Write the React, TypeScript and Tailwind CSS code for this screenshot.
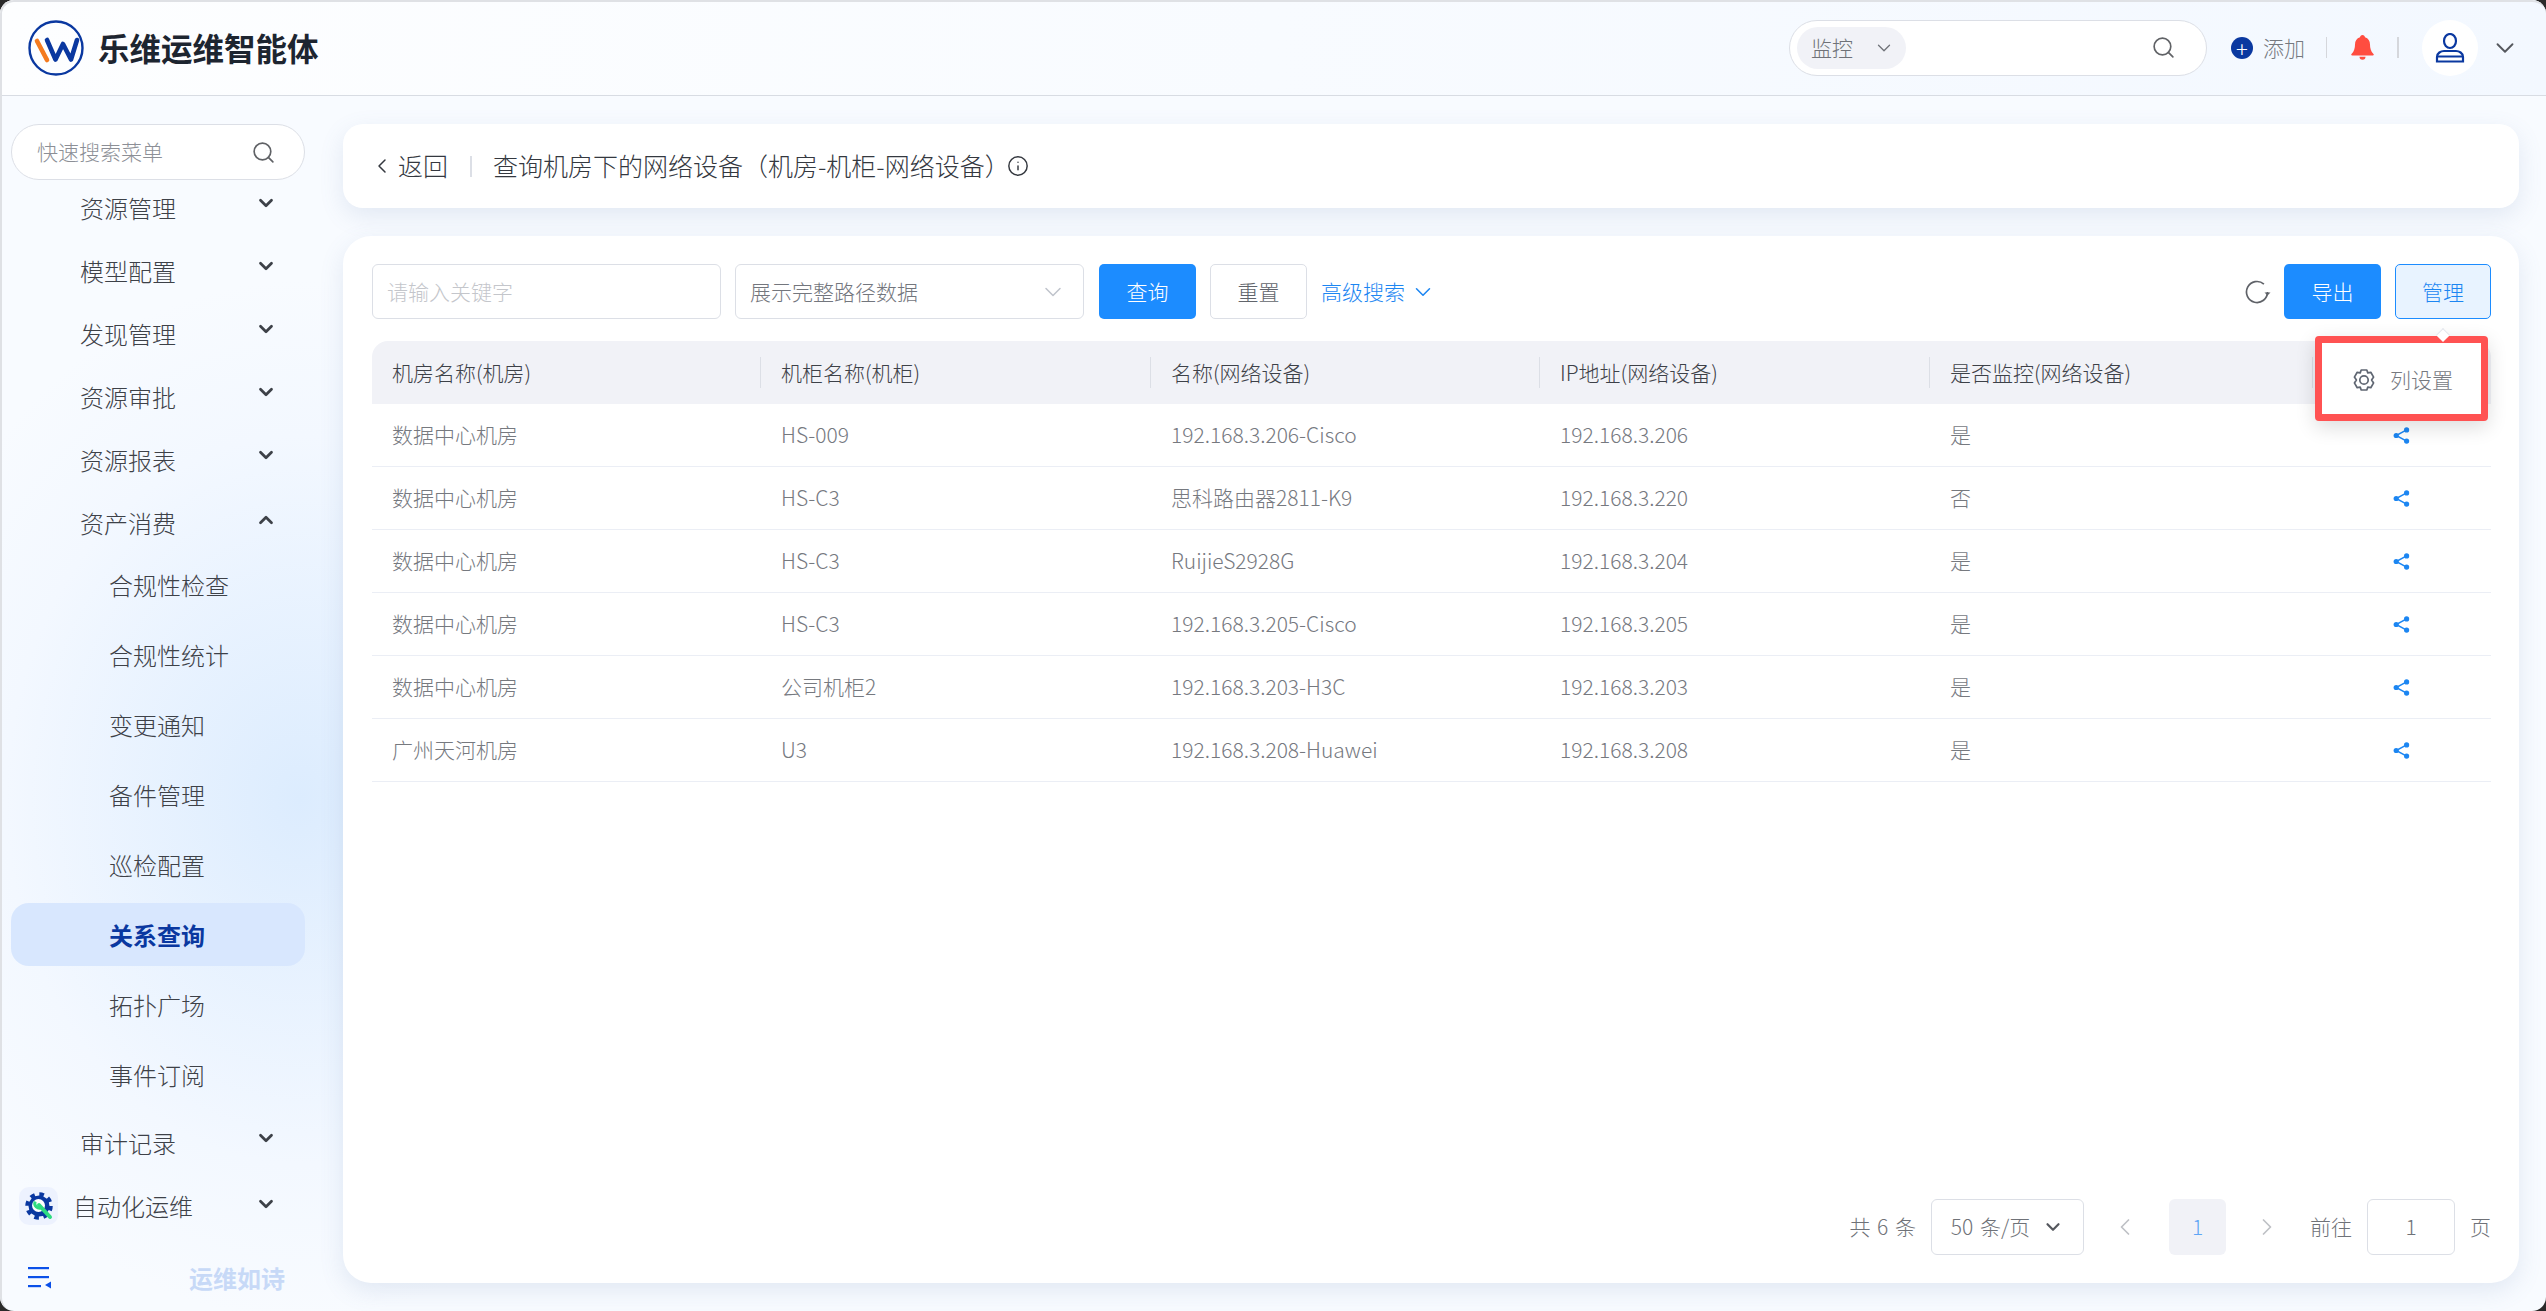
import { ChevronDown, ChevronLeft, ChevronRight, ChevronUp, Info, Search } from 'lucide-react'

const groupsTop = ['资源管理', '模型配置', '发现管理', '资源审批', '资源报表']
const subItems = ['合规性检查', '合规性统计', '变更通知', '备件管理', '巡检配置', '关系查询', '拓扑广场', '事件订阅']

const columns = ['机房名称(机房)', '机柜名称(机柜)', '名称(网络设备)', 'IP地址(网络设备)', '是否监控(网络设备)']
const rows = [
  ['数据中心机房', 'HS-009', '192.168.3.206-Cisco', '192.168.3.206', '是'],
  ['数据中心机房', 'HS-C3', '思科路由器2811-K9', '192.168.3.220', '否'],
  ['数据中心机房', 'HS-C3', 'RuijieS2928G', '192.168.3.204', '是'],
  ['数据中心机房', 'HS-C3', '192.168.3.205-Cisco', '192.168.3.205', '是'],
  ['数据中心机房', '公司机柜2', '192.168.3.203-H3C', '192.168.3.203', '是'],
  ['广州天河机房', 'U3', '192.168.3.208-Huawei', '192.168.3.208', '是'],
]

const gridCols = 'grid grid-cols-[389px_390px_389px_390px_383px_178px]'

function Logo() {
  return (
    <svg width="56" height="56" viewBox="0 0 56 56" fill="none">
      <circle cx="28" cy="28" r="26.5" stroke="#0a38a0" strokeWidth="2.4" />
      <path d="M9 21l10 19" stroke="#f47b20" strokeWidth="4.6" strokeLinecap="round" />
      <path d="M19 20l8.500 19.500L35 24l8 15.500L49 20" stroke="#0a38a0" strokeWidth="4.6" strokeLinecap="round" strokeLinejoin="round" />
    </svg>
  )
}

function ShareIcon() {
  return (
    <svg width="17" height="17" viewBox="0 0 17 17" fill="#1c86f2" stroke="#1c86f2">
      <circle cx="3.200" cy="8.500" r="2.600" stroke="none" />
      <circle cx="13.600" cy="2.900" r="2.600" stroke="none" />
      <circle cx="13.600" cy="14.100" r="2.600" stroke="none" />
      <path d="M13.600 2.900L3.200 8.500l10.400 5.600" fill="none" strokeWidth="1.500" />
    </svg>
  )
}

function GearIcon() {
  return (
    <svg width="24" height="24" viewBox="0 0 24 24" fill="none" stroke="#5f6672" strokeWidth="1.700" strokeLinejoin="round">
      <path d="M9.200 2h5.600l1 2.900 3-.6 2.800 4.800-2 2.900 2 2.900-2.800 4.800-3-.6-1 2.900H9.200l-1-2.900-3 .6-2.800-4.800 2-2.900-2-2.900 2.800-4.800 3 .6z" />
      <circle cx="12" cy="12" r="4.200" />
    </svg>
  )
}

function RefreshIcon() {
  return (
    <svg width="26" height="24" viewBox="0 0 26 24" fill="none" stroke="#5f6268" strokeWidth="1.700" className="ml-auto">
      <path d="M22.500 12a10.500 10.500 0 1 1-3.600-7.900" />
      <path d="M19.500 12.500h6l-3 3z" fill="#5f6268" stroke="none" />
    </svg>
  )
}

function AutoIcon() {
  return (
    <svg width="28" height="28" viewBox="0 0 28 28" fill="none">
      <circle cx="14" cy="14" r="10.500" fill="#0a38a0" />
      <circle cx="14" cy="14" r="11.500" stroke="#0a38a0" strokeWidth="4.500" strokeDasharray="4.500 4.530" />
      <circle cx="13.500" cy="13.500" r="6.500" fill="#fff" />
      <path d="M14 13l11 12" stroke="#2fdc80" strokeWidth="4" strokeLinecap="round" />
      <path d="M10.200 9.500a4.800 4.800 0 0 0 6.600 6.200" stroke="#2fdc80" strokeWidth="3" />
    </svg>
  )
}

function CollapseIcon() {
  return (
    <svg width="23" height="22" viewBox="0 0 23 22" fill="#0b50e8">
      <rect x="0" y="0" width="21" height="2.200" />
      <rect x="0" y="9" width="21" height="2.200" />
      <rect x="0" y="18" width="13" height="2.200" />
      <path d="M23 14.500v7l-6-3.500z" />
    </svg>
  )
}

function BellIcon() {
  return (
    <svg width="25" height="25" viewBox="0 0 25 25" fill="#ff4d40">
      <path d="M12.500 0c1.400 0 2.400 1 2.500 2.300 3.300 1 5 3.900 5 7.200 0 3.600.8 6.800 3.500 9.500.6.700.2 1.500-.7 1.500H2.200c-.9 0-1.300-.8-.7-1.500C4.200 16.300 5 13.100 5 9.500c0-3.300 1.700-6.200 5-7.200C10.100 1 11.100 0 12.500 0z" />
      <path d="M9.500 21.700h6a3 3 0 0 1-6 0z" />
    </svg>
  )
}

function UserIcon() {
  return (
    <svg width="30" height="30" viewBox="0 0 30 30" fill="none" stroke="#0a38a0" strokeWidth="2.200">
      <ellipse cx="15" cy="8" rx="6" ry="7" />
      <path d="M2 28.500v-4.500c0-4 4-6 7-6h12c3 0 7 2 7 6v4.500z" />
      <path d="M2 23.500h26" />
    </svg>
  )
}

function Sidebar() {
  return (
    <aside className="flex h-full w-[343px] shrink-0 flex-col overflow-hidden">
      <div className="ml-[11px] mt-[28px] flex h-[56px] w-[294px] shrink-0 items-center justify-between rounded-full border border-[#dcdfe6] bg-white pl-[25px] pr-[28px]">
        <span className="text-[21px] text-[#8c8f96]">快速搜索菜单</span>
        <Search size={25} strokeWidth={1.6} className="text-[#606266]" />
      </div>
      <nav className="-mt-[4px] flex w-[316px] flex-col text-[24px] text-[#3d4148]">
        {groupsTop.map((label) => (
          <MenuRow key={label} label={label} />
        ))}
        <MenuRow label="资产消费" open />
        <div className="mt-[-1px] flex flex-col">
          {subItems.map((label) => (
            <div
              key={label}
              className={`ml-[11px] mb-[7px] flex h-[63px] w-[294px] items-center rounded-[18px] pl-[98px] ${
                label === '关系查询' ? 'bg-[#d8e7fe] font-bold text-[#0a38a0]' : ''
              }`}
            >
              {label}
            </div>
          ))}
        </div>
        <div className="mt-[-2px]">
          <MenuRow label="审计记录" />
        </div>
        <div className="flex h-[63px] items-center pl-[19px] pr-[39px]">
          <span className="flex h-[38px] w-[39px] items-center justify-center rounded-[10px] bg-[#edf2fe]">
            <AutoIcon />
          </span>
          <span className="ml-[15px] flex-1">自动化运维</span>
          <ChevronDown size={22} strokeWidth={3} className="-translate-y-[2px]" />
        </div>
      </nav>
      <div className="mt-auto mb-[15px] flex items-center pl-[28px]">
        <CollapseIcon />
        <span className="ml-[138px] text-[24px] font-bold text-[#c7d9f7]">运维如诗</span>
      </div>
    </aside>
  )
}

function MenuRow({ label, open }: { label: string; open?: boolean }) {
  return (
    <div className="flex h-[63px] items-center pl-[80px] pr-[39px]">
      <span className="flex-1">{label}</span>
      {open ? (
        <ChevronUp size={22} strokeWidth={3} className="-translate-y-[3px]" />
      ) : (
        <ChevronDown size={22} strokeWidth={3} className="-translate-y-[5px]" />
      )}
    </div>
  )
}

function Toolbar() {
  return (
    <div className="flex h-[55px] items-center text-[21px]">
      <div className="flex h-full w-[349px] items-center rounded-[6px] border border-[#dcdfe6] pl-[14px] text-[#c4c6cb]">请输入关键字</div>
      <div className="ml-[14px] flex h-full w-[349px] items-center justify-between rounded-[6px] border border-[#dcdfe6] pl-[14px] pr-[16px] text-[#73767d]">
        展示完整路径数据
        <ChevronDown size={28} strokeWidth={1.3} className="text-[#c0c4cc]" />
      </div>
      <button className="ml-[15px] h-full w-[97px] rounded-[5px] bg-[#1c8cff] text-white">查询</button>
      <button className="ml-[14px] h-full w-[97px] rounded-[5px] border border-[#dcdfe6] bg-white text-[#61646b]">重置</button>
      <span className="ml-[14px] text-[#1c86f2]">高级搜索</span>
      <ChevronDown size={26} strokeWidth={1.4} className="ml-[5px] text-[#1c86f2]" />
      <RefreshIcon />
      <button className="ml-[13px] h-full w-[97px] rounded-[5px] bg-[#1c8cff] text-white">导出</button>
      <button className="ml-[14px] h-full w-[96px] rounded-[5px] border border-[#1c8cff] bg-[#e8f3ff] text-[#1c86f2]">管理</button>
    </div>
  )
}

function DataTable() {
  return (
    <div className="mt-[22px] text-[21px]">
      <div className={`${gridCols} h-[63px] items-center rounded-t-[16px] bg-[#f1f2f7] text-[#3d4148]`}>
        {columns.map((col) => (
          <div key={col} className="flex h-[31px] items-center border-r border-[#dcdfe6] pl-[20px]">
            {col}
          </div>
        ))}
        <div />
      </div>
      {rows.map((row, i) => (
        <div key={i} className={`${gridCols} h-[63px] items-center border-b border-[#ebeef5] text-[#76797f]`}>
          {row.map((cell, j) => (
            <div key={j} className="pl-[20px]">
              {cell}
            </div>
          ))}
          <div className="flex justify-center pr-[1px]">
            <ShareIcon />
          </div>
        </div>
      ))}
    </div>
  )
}

function Pagination() {
  return (
    <div className="mt-auto flex h-[56px] items-center justify-end text-[21px] text-[#6f7278] [word-spacing:2px]">
      <span>共 6 条</span>
      <div className="ml-[15px] flex h-full w-[153px] items-center justify-center gap-[12px] rounded-[6px] border border-[#dcdfe6]">
        50 条/页
        <ChevronDown size={22} strokeWidth={2.4} className="text-[#55585e]" />
      </div>
      <ChevronLeft size={28} strokeWidth={1.5} className="ml-[27px] text-[#bfc1c6]" />
      <span className="ml-[30px] flex h-full w-[57px] items-center justify-center rounded-[6px] bg-[#f1f2f7] text-[#5ea5f5]">1</span>
      <ChevronRight size={28} strokeWidth={1.5} className="ml-[27px] text-[#bfc1c6]" />
      <span className="ml-[29px]">前往</span>
      <span className="ml-[15px] flex h-full w-[88px] items-center justify-center rounded-[6px] border border-[#dcdfe6]">1</span>
      <span className="ml-[15px]">页</span>
    </div>
  )
}

export default function App() {
  return (
    <div className="h-[1311px] w-[2546px] overflow-hidden bg-[#2a2a2a] font-['Noto_Sans_CJK_SC',sans-serif] font-light">
      <div className="relative flex h-full flex-col overflow-hidden rounded-[14px] bg-[radial-gradient(ellipse_420px_520px_at_300px_800px,#dcecfe_0%,#f3f8ff_70%,#f8fbff_100%)]">
        <header className="flex h-[96px] shrink-0 items-center border-b border-[#d8dce3] bg-[linear-gradient(90deg,#fdfeff,#f3f8ff)] pl-[28px]">
          <Logo />
          <h1 className="ml-[14px] text-[31.5px] font-bold text-[#1d2530]">乐维运维智能体</h1>
          <div className="ml-auto flex h-[56px] w-[418px] items-center rounded-full border border-[#dcdfe6] bg-white pl-[7px] pr-[30px]">
            <div className="flex h-[42px] w-[109px] items-center rounded-full bg-[#f1f2f7] pl-[14px] text-[21px] text-[#6f7278]">
              监控
              <ChevronDown size={22} strokeWidth={1.4} className="ml-[20px]" />
            </div>
            <Search size={25} strokeWidth={1.6} className="ml-auto text-[#606266]" />
          </div>
          <span className="ml-[24px] flex h-[22px] w-[22px] items-center justify-center rounded-full bg-[#0a38a0] text-[22px] leading-none text-white">+</span>
          <span className="ml-[10px] text-[21px] text-[#76797f]">添加</span>
          <span className="ml-[21px] h-[21px] w-[1px] bg-[#d5d7dc]" />
          <span className="ml-[23px] flex">
            <BellIcon />
          </span>
          <span className="ml-[22px] h-[21px] w-[2px] bg-[#d5d7dc]" />
          <span className="ml-[23px] flex h-[56px] w-[56px] items-center justify-center rounded-full bg-white">
            <UserIcon />
          </span>
          <ChevronDown size={30} strokeWidth={1.5} className="ml-[12px] mr-[26px] text-[#55585e]" />
        </header>
        <div className="flex min-h-0 flex-1">
          <Sidebar />
          <main className="flex min-w-0 flex-1 flex-col pt-[28px] pr-[27px] pb-[28px]">
            <div className="flex h-[84px] shrink-0 items-center rounded-[20px] bg-white pl-[27px] text-[25px] text-[#34383f] shadow-[0_8px_24px_rgba(90,120,170,0.14)]">
              <ChevronLeft size={24} strokeWidth={1.5} />
              <span className="ml-[4px]">返回</span>
              <span className="ml-[22px] h-[21px] w-[2px] bg-[#dcdfe6]" />
              <span className="ml-[21px]">查询机房下的网络设备（机房-机柜-网络设备）</span>
              <Info size={22} strokeWidth={1.6} className="-ml-[3px]" />
            </div>
            <section className="relative mt-[28px] flex min-h-0 flex-1 flex-col rounded-[28px] bg-white pl-[29px] pr-[28px] pt-[28px] pb-[28px] shadow-[0_8px_24px_rgba(90,120,170,0.14)]">
              <Toolbar />
              <DataTable />
              <Pagination />
              <div className="absolute top-[100px] left-[1972px] h-[85px] w-[173px] rounded-[4px] border-[7px] border-[#ff5252] bg-white shadow-[0_6px_20px_rgba(0,0,0,0.14)]">
                <span className="absolute -top-[13px] left-[116px] h-[10px] w-[10px] rotate-45 border-t border-l border-[#e4e7ed] bg-white" />
                <div className="flex h-full items-center pl-[30px] pt-[2px] text-[21px] text-[#76797f]">
                  <GearIcon />
                  <span className="ml-[14px]">列设置</span>
                </div>
              </div>
            </section>
          </main>
        </div>
        <div className="pointer-events-none absolute inset-0 rounded-[14px] border-t-2 border-l-2 border-[#dfe1e5]" />
      </div>
    </div>
  )
}
